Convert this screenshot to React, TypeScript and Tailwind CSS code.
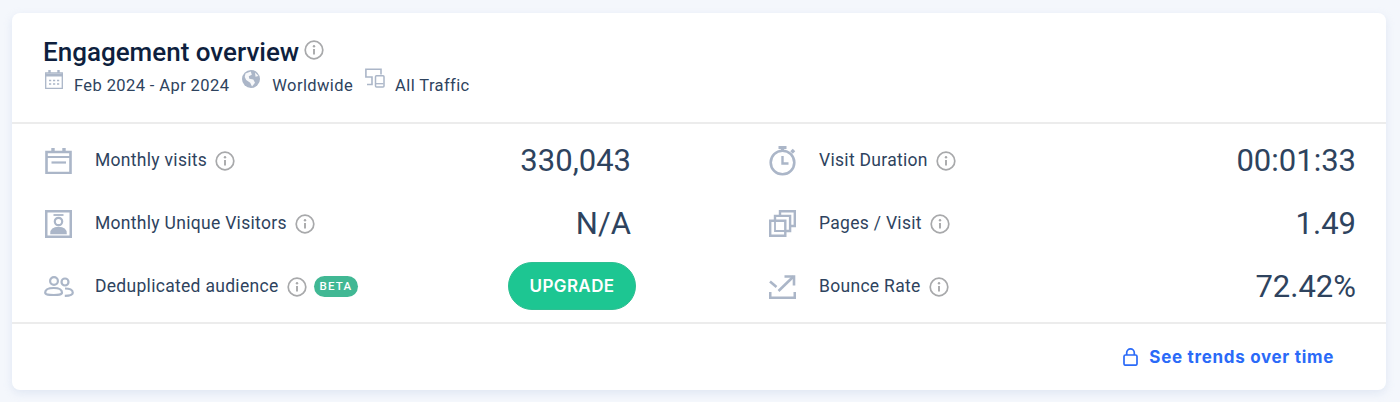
import React from "react";

const Info = ({ size = 20 }: { size?: number }) => (
  <svg width={size} height={size} viewBox="0 0 20 20" fill="none" className="shrink-0">
    <circle cx="10" cy="10" r="8.800" stroke="#a8a9ab" strokeWidth="1.700" />
    <circle cx="10" cy="6.200" r="1.200" fill="#a8a9ab" />
    <path d="M10 9v5.600" stroke="#a8a9ab" strokeWidth="1.900" />
  </svg>
);

const C = "#abb6c8";

const CalIcon = () => (
  <svg width="27" height="26" viewBox="0 0 27 26" fill="none" className="ml-[1px]">
    <path d="M1.500 4h24v21h-24z" stroke={C} strokeWidth="2.600" />
    <path d="M1 9h25" stroke={C} strokeWidth="2" />
    <path d="M6.500 14.500h14.500" stroke={C} strokeWidth="2.200" />
    <path d="M8 0v4M19 0v4" stroke={C} strokeWidth="3.400" />
  </svg>
);
const IdIcon = () => (
  <svg width="27" height="28" viewBox="0 0 27 28" fill="none" className="ml-[1px]">
    <path d="M1.200 1.200h24.600v25.600H1.200z" stroke={C} strokeWidth="2.600" />
    <path d="M8.500 5h10" stroke={C} strokeWidth="1.800" />
    <circle cx="13.500" cy="11.500" r="3.700" stroke={C} strokeWidth="2.200" />
    <path d="M6 23.500c0-4 3-6 7.500-6s7.500 2 7.500 6z" fill={C} stroke={C} strokeWidth="1.500" />
  </svg>
);
const PeopleIcon = () => (
  <svg width="30" height="21" viewBox="0 0 30 21" fill="none">
    <circle cx="10" cy="5" r="3.900" stroke={C} strokeWidth="2.200" />
    <circle cx="21" cy="6" r="3.500" stroke={C} strokeWidth="2.200" />
    <path d="M1.200 16.500c0-3 3.700-4.500 8.500-4.500s8.300 1.500 8.300 4.500c0 2.500-3.700 2.500-8.300 2.500s-8.500 0-8.500-2.500z" stroke={C} strokeWidth="2.200" />
    <path d="M21 12.500c4.500 0 7.800 1.500 7.800 4.200 0 2-1.800 3-8 3.100" stroke={C} strokeWidth="2.200" />
  </svg>
);
const TimerIcon = () => (
  <svg width="28" height="30" viewBox="0 0 28 30" fill="none">
    <circle cx="13.500" cy="16.500" r="11.800" stroke={C} strokeWidth="2.600" />
    <path d="M9.500 1.500h8M13.500 1.500v3.500" stroke={C} strokeWidth="3" />
    <path d="M22.500 6.500l2.500-2.500" stroke={C} strokeWidth="3.600" />
    <path d="M13.500 10v7.500h6" stroke={C} strokeWidth="2.400" />
  </svg>
);
const PagesIcon = () => (
  <svg width="27" height="27" viewBox="0 0 27 27" fill="none">
    <path d="M1.200 10.700h15.100v15.100H1.200z" stroke={C} strokeWidth="2.400" />
    <path d="M6 10.700V5.900h15.100V21h-4.800" stroke={C} strokeWidth="2.400" />
    <path d="M11 5.900V1.200h14.800V16h-4.700" stroke={C} strokeWidth="2.400" />
    <path d="M6 11v10h10.300" stroke={C} strokeWidth="1.800" />
  </svg>
);
const BounceIcon = () => (
  <svg width="27" height="24" viewBox="0 0 27 24" fill="none">
    <path d="M1 6.500l6.500 5.500" stroke={C} strokeWidth="2.600" />
    <path d="M9.500 16L24.500 1.500" stroke={C} strokeWidth="2.600" />
    <path d="M15.500 1.500h9.500v9" stroke={C} strokeWidth="2.600" />
    <path d="M1.200 17v5.700h24.600V17" stroke={C} strokeWidth="2.600" />
  </svg>
);

const Row = ({
  icon,
  label,
  extra,
  value,
  labelClass = "",
}: {
  icon: React.ReactNode;
  label: string;
  extra?: React.ReactNode;
  value: React.ReactNode;
  labelClass?: string;
}) => (
  <div className="flex h-[63px] items-center">
    <div className="flex w-[50px] shrink-0 items-center justify-start">{icon}</div>
    <span className={`text-[17.500px] leading-none tracking-[0.3px] text-[#2e435e] ${labelClass}`}>{label}</span>
    <span className="ml-[8px] flex items-center">
      <Info />
    </span>
    {extra}
    <div className="ml-auto text-[31px] leading-none text-[#2e435e]">{value}</div>
  </div>
);

export default function App() {
  return (
    <div className="h-[402px] w-[1400px] overflow-hidden bg-[#f4f7fc] pl-[12px] pt-[13px] font-['Roboto',sans-serif]">
      <div className="h-[377px] w-[1374px] rounded-[8px] bg-white shadow-[0_3px_8px_rgba(180,195,225,0.3)]">
        <div className="h-[111px] border-b-2 border-[#ececec] pl-[31px] pt-[24px]">
          <div className="flex items-center">
            <h1 className="text-[26px] font-medium leading-[30px] text-[#0e1f3e]">Engagement overview</h1>
            <span className="-mt-[4px] ml-[5px]">
              <Info />
            </span>
          </div>
          <div className="mt-[6px] flex items-center text-[16.500px] leading-[26px] tracking-[0.4px] text-[#2e435e]">
            <svg width="18" height="19" viewBox="0 0 18 19" fill="none" className="-mt-[14px] ml-[2px]">
              <path d="M.700 3h16.600v15.300H.700z" stroke={C} strokeWidth="1.300" />
              <path d="M0 5.200h18" stroke={C} strokeWidth="2.600" />
              <path d="M4.500 0v3M13.500 0v3" stroke={C} strokeWidth="2.400" />
              <path d="M4 10.500h2.200M8 10.500h2.200M12 10.500h2.200M4 14h2.200M8 14h2.200M12 14h2.200" stroke={C} strokeWidth="1.700" />
            </svg>
            <span className="ml-[11px]">Feb 2024 - Apr 2024</span>
            <svg width="18" height="18" viewBox="0 0 18 18" className="-mt-[14px] ml-[13px]">
              <circle cx="9" cy="9" r="9" fill={C} />
              <path d="M3.500 3.500L8.800 1.500l1 3.300-3 1.500.5 2.500 4 .7 1.700 3.300-3 3.700-1.800-3.700-4-2.800-1.500-3z" fill="#fff" opacity=".9" />
              <path d="M13 2.500l3.500 3.500-3 .8z" fill="#fff" opacity=".9" />
            </svg>
            <span className="ml-[12px]">Worldwide</span>
            <svg width="20" height="20" viewBox="0 0 20 20" fill="none" className="-mt-[16px] ml-[12px]">
              <path d="M16 6.500V1.200H.900V9H7v7.500H2" stroke={C} strokeWidth="1.600" />
              <rect x="10.500" y="7.700" width="8.500" height="11.300" rx="1" stroke={C} strokeWidth="1.500" />
              <path d="M11 15.700h7.500" stroke={C} strokeWidth="1.300" />
            </svg>
            <span className="ml-[10px]">All Traffic</span>
          </div>
        </div>

        <div className="grid h-[200px] grid-cols-[587px_587px] gap-x-[138px] border-b-2 border-[#ececec] pl-[32px] pt-[5px]">
          <div>
            <Row icon={<CalIcon />} label="Monthly visits" labelClass="ml-[1px]" value="330,043" />
            <Row icon={<IdIcon />} label="Monthly Unique Visitors" labelClass="ml-[1px]" value="N/A" />
            <Row
              icon={<PeopleIcon />}
              label="Deduplicated audience"
              labelClass="ml-[1px]"
              extra={
                <span className="ml-[7px] rounded-full bg-[#41b894] px-[6px] text-[11.500px] font-medium leading-[21px] tracking-[1.200px] text-white">
                  BETA
                </span>
              }
              value={
                <button className="-mr-[5px] -mt-[1px] flex h-[48px] w-[128px] items-center justify-center rounded-full border border-[#2ebf92] bg-[#1dc692] font-['Inter',sans-serif] text-[17px] font-semibold tracking-[0.4px] text-white">
                  UPGRADE
                </button>
              }
            />
          </div>
          <div>
            <Row icon={<TimerIcon />} label="Visit Duration" value="00:01:33" />
            <Row icon={<PagesIcon />} label="Pages / Visit" value="1.49" />
            <Row icon={<BounceIcon />} label="Bounce Rate" value="72.42%" />
          </div>
        </div>

        <div className="flex h-[66px] items-center justify-end pr-[52px]">
          <svg width="15" height="18" viewBox="0 0 15 18" fill="none" className="mr-[11px]">
            <rect x="1" y="7" width="13" height="10.200" rx="1.500" stroke="#2a6af8" strokeWidth="1.700" />
            <path d="M3.700 7V4.700a3.800 3.800 0 0 1 7.600 0V7" stroke="#2a6af8" strokeWidth="1.700" />
          </svg>
          <a className="font-['Inter',sans-serif] text-[17px] font-bold leading-none tracking-[0.7px] text-[#2a6af8]">
            See trends over time
          </a>
        </div>
      </div>
    </div>
  );
}
